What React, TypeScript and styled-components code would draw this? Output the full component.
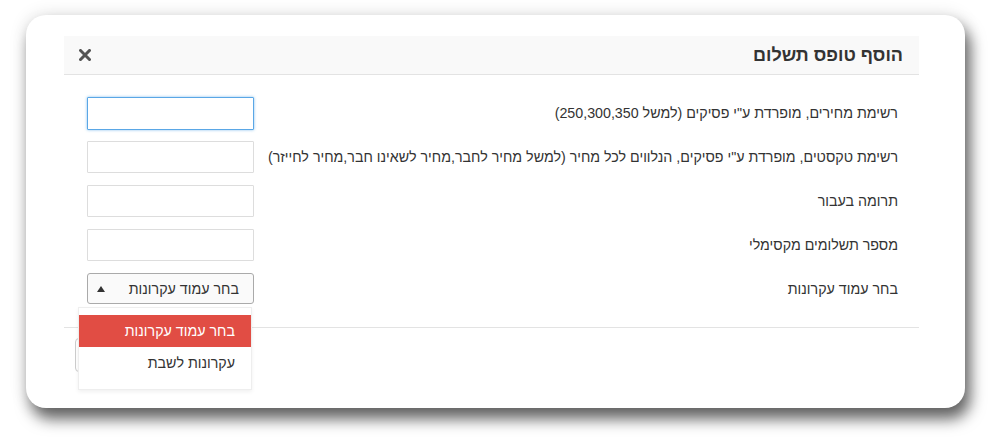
import React from "react";
import styled, { createGlobalStyle, css } from "styled-components";

const GlobalStyle = createGlobalStyle`
  html, body { margin: 0; padding: 0; background: #fff; }
  body { font-family: "Liberation Sans", Arial, sans-serif; color: #333; }
  * { box-sizing: border-box; }
`;

const Page = styled.div`
  width: 991px;
  height: 444px;
  padding: 15px 26px 0 26px;
`;

const Card = styled.div`
  width: 939px;
  height: 393px;
  background: #fff;
  border-radius: 20px;
  box-shadow: 5px 11px 15px rgba(0, 0, 0, 0.6), 0 0 18px rgba(0, 0, 0, 0.12);
  padding: 21px 46px 0 38px;
  direction: rtl;
`;

const Header = styled.div`
  height: 39px;
  background: #f9f9f9;
  border-bottom: 1px solid #e3e3e3;
  display: flex;
  align-items: center;
  justify-content: space-between;
  padding: 0 16px 0 15px;
`;

const Title = styled.h4`
  margin: 0;
  font-size: 18px;
  font-weight: bold;
  color: #333;
`;

const CloseButton = styled.button`
  border: 0;
  background: none;
  padding: 0;
  width: 12px;
  height: 12px;
  display: flex;
  cursor: pointer;
`;

const Body = styled.div`
  padding: 22px 21px 22px 23px;
  display: flex;
  flex-direction: column;
  gap: 12px;
  border-bottom: 1px solid #e3e3e3;
`;

const Row = styled.div`
  display: flex;
  align-items: center;
  justify-content: space-between;
  height: 32px;
`;

const Label = styled.label`
  font-size: 14.25px;
  color: #333;
  white-space: nowrap;
`;

const Input = styled.input<{ $focused?: boolean }>`
  width: 167px;
  height: 32px;
  border: 1px solid #ddd;
  border-radius: 1px;
  background: #fff;
  font-family: inherit;
  font-size: 14px;
  padding: 4px 6px;
  outline: none;
  direction: rtl;
  ${(p) =>
    p.$focused &&
    css`
      border-color: #5aa7e6;
      box-shadow: 0 0 3px rgba(102, 175, 233, 0.8);
      height: 33px;
    `}
`;

const SelectWrap = styled.div`
  position: relative;
  width: 167px;
  height: 32px;
`;

const SelectButton = styled.button`
  width: 167px;
  height: 31px;
  border: 1px solid #aaa;
  border-radius: 3px;
  background: #fafafa;
  display: flex;
  align-items: center;
  justify-content: space-between;
  padding: 0 14px 0 9px;
  font-family: inherit;
  font-size: 14.25px;
  color: #333;
  direction: rtl;
`;

const Caret = styled.span`
  width: 0;
  height: 0;
  border-left: 4px solid transparent;
  border-right: 4px solid transparent;
  border-bottom: 6px solid #333;
`;

const Menu = styled.ul`
  position: absolute;
  top: 34px;
  left: -9px;
  width: 174px;
  margin: 0;
  padding: 7px 0 10px 0;
  list-style: none;
  background: #fff;
  border: 1px solid #eee;
  box-shadow: 0 2px 4px rgba(0, 0, 0, 0.06);
  z-index: 10;
`;

const MenuItem = styled.li<{ $active?: boolean }>`
  height: 32px;
  display: flex;
  align-items: center;
  padding: 0 16px;
  font-size: 14.25px;
  color: #333;
  ${(p) =>
    p.$active &&
    css`
      background: #e14d44;
      color: #fff;
    `}
`;

const Footer = styled.div`
  padding: 10px 0 0 11px;
  display: flex;
  justify-content: flex-end;
`;

const FooterButton = styled.button`
  width: 120px;
  height: 34px;
  border: 1px solid #ccc;
  border-radius: 4px;
  background: #fff;
  font-family: inherit;
  font-size: 14px;
  color: #333;
`;

const fields = [
  'רשימת מחירים, מופרדת ע"י פסיקים (למשל 250,300,350)',
  'רשימת טקסטים, מופרדת ע"י פסיקים, הנלווים לכל מחיר (למשל מחיר לחבר,מחיר לשאינו חבר,מחיר לחייזר)',
  "תרומה בעבור",
  "מספר תשלומים מקסימלי",
];

export default function App() {
  return (
    <>
      <GlobalStyle />
      <Page>
        <Card>
          <Header>
            <Title>הוסף טופס תשלום</Title>
            <CloseButton aria-label="close">
              <svg width="12" height="12" viewBox="0 0 12 12">
                <path d="M1.5 1.5 L10.5 10.5 M10.5 1.5 L1.5 10.5" stroke="#555" strokeWidth="3" strokeLinecap="square" />
              </svg>
            </CloseButton>
          </Header>
          <Body>
            {fields.map((f, i) => (
              <Row key={i}>
                <Label>{f}</Label>
                <Input $focused={i === 0} />
              </Row>
            ))}
            <Row>
              <Label>בחר עמוד עקרונות</Label>
              <SelectWrap>
                <SelectButton>
                  <span>בחר עמוד עקרונות</span>
                  <Caret />
                </SelectButton>
                <Menu>
                  <MenuItem $active>בחר עמוד עקרונות</MenuItem>
                  <MenuItem>עקרונות לשבת</MenuItem>
                </Menu>
              </SelectWrap>
            </Row>
          </Body>
          <Footer>
            <FooterButton>סגור</FooterButton>
          </Footer>
        </Card>
      </Page>
    </>
  );
}
